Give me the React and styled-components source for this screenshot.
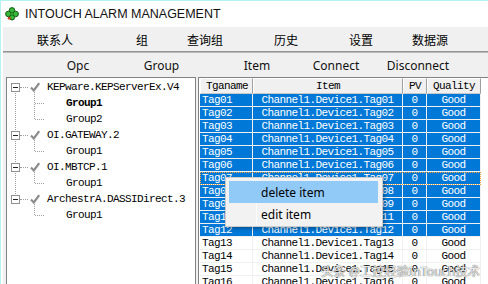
import React from "react"
import styled, {createGlobalStyle} from "styled-components"

const GlobalStyle = createGlobalStyle`
  html, body {
    margin: 0;
    padding: 0;
    width: 488px;
    height: 284px;
    overflow: hidden;
    background: #fff;
  }
  body {
    font-family: "Noto Sans", "Noto Sans CJK SC", sans-serif;
  }
`

const Window = styled.div`
  position: relative;
  display: flex;
  flex-direction: column;
  width: 488px;
  height: 284px;
  box-sizing: border-box;
  border-top: 1px solid #b5f2f2;
  border-left: 1px solid #b5f2f2;
  background: #fff;
  overflow: hidden;
`
const TitleBar = styled.div`
  display: flex;
  align-items: center;
  gap: 6px;
  height: 26px;
  padding-left: 4px;
  flex: none;

  font-family: "Liberation Sans", sans-serif;
  font-size: 12.5px;
  color: #111;
`
const Main = styled.div`
  display: flex;
  flex-direction: column;
  margin-left: 2px;
  background: #f0f0f0;
  flex: 1;
  min-height: 0;
`
const MenuBar = styled.div`
  display: grid;
  grid-template-columns: 104px 70px 56px 106px 44px 94px;
  align-items: center;
  height: 24px;
  flex: none;

  font-family: "Noto Sans CJK SC", sans-serif;
  font-size: 12px;
  color: #000;
`
const MenuItem = styled.div`
  text-align: center;
`
const Separator = styled.div`
  height: 2px;
  box-sizing: border-box;
  border-top: 1px solid #959595;
  border-bottom: 1px solid #b9b9b9;
  flex: none;
`
const ToolBar = styled.div`
  display: grid;
  grid-template-columns: 80px 87px 104px 54px 110px;
  align-items: center;
  height: 24px;
  padding-left: 35px;
  flex: none;

  font-family: "Noto Sans", sans-serif;
  font-size: 12px;
  color: #111;
`
const ToolButton = styled.div`
  text-align: center;
`
const Panes = styled.div`
  display: flex;
  gap: 2px;
  padding-left: 3px;
  height: 230px;
  flex: none;
`
const TreePanel = styled.div`
  width: 199px;
  box-sizing: border-box;
  border: 1px solid #828282;
  background: #fff;
  padding-top: 1px;

  font-family: "Liberation Mono", monospace;
  font-size: 11px;
  letter-spacing: -0.6px;
  color: #000;
`
const TreeRoot = styled.div`
  position: relative;

  &::before {
    content: "";
    display: ${({$last}) => $last ? "none" : "block"};
    position: absolute;
    left: 8px;
    top: 12px;
    bottom: -3px;
    border-left: 1px dotted #a0a0a0;
  }
`
const TreeRow = styled.div`
  position: relative;
  display: flex;
  align-items: center;
  height: 16px;
  white-space: nowrap;
`
const ExpandBox = styled.span`
  position: relative;
  width: 9px;
  height: 9px;
  margin-left: 4px;
  box-sizing: border-box;
  border: 1px solid #919191;
  background: #fff;
  flex: none;

  &::after {
    content: "";
    position: absolute;
    left: 1px;
    right: 1px;
    top: 3px;
    height: 1px;
    background: #222;
  }
`
const Dots = styled.span`
  width: 8px;
  border-top: 1px dotted #a0a0a0;
  flex: none;
`
const CheckMark = styled.svg`
  width: 10px;
  height: 10px;
  margin-left: 2px;
  margin-right: 7px;
  flex: none;
`
const ChildRow = styled(TreeRow)`
  padding-left: 59px;
  font-weight: ${({$bold}) => $bold ? "bold" : "normal"};

  &::before {
    content: "";
    position: absolute;
    left: 27px;
    top: -3px;
    ${({$last}) => $last ? "height: 11px;" : "bottom: 0;"}
    border-left: 1px dotted #a0a0a0;
  }
  &::after {
    content: "";
    position: absolute;
    left: 28px;
    top: 8px;
    width: 9px;
    border-top: 1px dotted #a0a0a0;
  }
`
const ListPanel = styled.div`
  width: 290px;
  flex: none;
  box-sizing: border-box;
  border: 1px solid #828282;
  border-right: none;
  background: #fff;
  padding-left: 1px;
`
const Table = styled.table`
  table-layout: fixed;
  border-collapse: separate;
  border-spacing: 0;
  width: 281px;

  font-family: "Liberation Mono", monospace;
  font-size: 11px;
  letter-spacing: -0.6px;
  line-height: 12px;
`
const HeadCell = styled.th`
  height: 16px;
  padding: 0 0 0 ${({$left}) => $left ? "5px" : "0"};
  box-sizing: border-box;
  background: #f0f0f0;
  border-top: 1px solid #fff;
  border-left: 1px solid #fff;
  border-right: 1px solid #a0a0a0;
  border-bottom: 1px solid #c8c8c8;
  font-weight: normal;
  text-align: ${({$left}) => $left ? "left" : "center"};
  color: #000;
  white-space: nowrap;
  overflow: hidden;
`
const Row = styled.tr`
  outline: ${({$focus}) => $focus ? "1px dotted #f2a33a" : "none"};
  outline-offset: -1px;
`
const Cell = styled.td`
  height: 12px;
  padding: 0 0 0 ${({$left}) => $left ? "2px" : "0"};
  border-right: 1px solid #f0f0f0;
  border-bottom: 1px solid #f0f0f0;
  background: ${({$selected}) => $selected ? "#0078d7" : "#fff"};
  color: ${({$selected}) => $selected ? "#fff" : "#000"};
  text-align: ${({$left}) => $left ? "left" : "center"};
  white-space: nowrap;
  overflow: hidden;
`
const ContextMenu = styled.div`
  position: absolute;
  left: 224px;
  top: 176px;
  width: 158px;
  box-sizing: border-box;
  padding: 3px 4px 1px 3px;
  background: #f2f2f2;
  border: 1px solid #cccccc;
  box-shadow: 2px 2px 3px rgba(0, 0, 0, 0.28);

  font-family: "Noto Sans", sans-serif;
  font-size: 12px;
  color: #000;

  &::before {
    content: "";
    position: absolute;
    left: 30px;
    top: 3px;
    bottom: 1px;
    width: 1px;
    background: #fcfcfc;
  }
`
const MenuEntry = styled.div`
  position: relative;
  display: flex;
  align-items: center;
  height: 22px;
  padding-left: 32px;
  background: ${({$active}) => $active ? "#91c9f7" : "transparent"};
`
const Watermark = styled.div`
  position: absolute;
  left: 320px;
  top: 261px;
  font-family: "Noto Sans", "Noto Sans CJK SC", sans-serif;
  font-size: 12.3px;
  color: rgba(250, 250, 250, 0.92);
  text-shadow: 0 0 1px #555, 0 0 1px #777;
  white-space: nowrap;
`

const CloverIcon = () => (
  <svg width="14" height="14" viewBox="0 0 14 14">
    <path d="M3 12 L6 8" stroke="#c0301e" strokeWidth="1.6" />
    <g fill="#38b838" stroke="#0d4d0d" strokeWidth="0.9">
      <circle cx="7" cy="3.4" r="2.8" />
      <circle cx="3.4" cy="7" r="2.8" />
      <circle cx="10.6" cy="7" r="2.8" />
      <circle cx="7" cy="10.4" r="2.6" />
    </g>
    <circle cx="7" cy="7" r="1.6" fill="#2e9a2e" />
    <circle cx="4.5" cy="11.2" r="1.3" fill="#d2381f" />
  </svg>
)

const Check = () => (
  <CheckMark viewBox="0 0 10 10">
    <path d="M1 5.5 L3.8 8.5 L9.2 1.2" fill="none" stroke="#8c8c8c" strokeWidth="2.2" />
  </CheckMark>
)

const menus = ["联系人", "组", "查询组", "历史", "设置", "数据源"]
const tools = ["Opc", "Group", "Item", "Connect", "Disconnect"]

const servers = [
  {name: "KEPware.KEPServerEx.V4", groups: [{name: "Group1", bold: true}, {name: "Group2"}]},
  {name: "OI.GATEWAY.2", groups: [{name: "Group1"}]},
  {name: "OI.MBTCP.1", groups: [{name: "Group1"}]},
  {name: "ArchestrA.DASSIDirect.3", groups: [{name: "Group1"}]},
]

const tags = ["01", "02", "03", "04", "05", "06", "07", "08", "09", "11", "12", "13", "14", "15", "16"]

const App = () => {
  return (
    <Window>
      <GlobalStyle />
      <TitleBar>
        <CloverIcon />
        <span>INTOUCH ALARM MANAGEMENT</span>
      </TitleBar>
      <Main>
        <MenuBar>
          {menus.map(m => <MenuItem key={m}>{m}</MenuItem>)}
        </MenuBar>
        <Separator />
        <ToolBar>
          {tools.map(t => <ToolButton key={t}>{t}</ToolButton>)}
        </ToolBar>
        <Panes>
          <TreePanel>
            {servers.map((s, i) => (
              <TreeRoot key={s.name} $last={i === servers.length - 1}>
                <TreeRow>
                  <ExpandBox />
                  <Dots />
                  <Check />
                  <span>{s.name}</span>
                </TreeRow>
                {s.groups.map((g, j) => (
                  <ChildRow key={g.name} $bold={g.bold} $last={j === s.groups.length - 1}>
                    {g.name}
                  </ChildRow>
                ))}
              </TreeRoot>
            ))}
          </TreePanel>
          <ListPanel>
            <Table>
              <colgroup>
                <col style={{width: 53}} />
                <col style={{width: 150}} />
                <col style={{width: 24}} />
                <col style={{width: 54}} />
              </colgroup>
              <thead>
                <tr>
                  <HeadCell $left>Tganame</HeadCell>
                  <HeadCell>Item</HeadCell>
                  <HeadCell>PV</HeadCell>
                  <HeadCell>Quality</HeadCell>
                </tr>
              </thead>
              <tbody>
                {tags.map((t, i) => {
                  const sel = i < 11
                  return (
                    <Row key={t} $focus={t === "07"}>
                      <Cell $left $selected={sel}>{`Tag${t}`}</Cell>
                      <Cell $selected={sel}>{`Channel1.Device1.Tag${t}`}</Cell>
                      <Cell $selected={sel}>0</Cell>
                      <Cell $selected={sel}>Good</Cell>
                    </Row>
                  )
                })}
              </tbody>
            </Table>
          </ListPanel>
        </Panes>
      </Main>
      <ContextMenu>
        <MenuEntry $active>delete item</MenuEntry>
        <MenuEntry>edit item</MenuEntry>
      </ContextMenu>
      <Watermark>头条 @工控经验InTouch技术</Watermark>
    </Window>
  )
}

export default App
